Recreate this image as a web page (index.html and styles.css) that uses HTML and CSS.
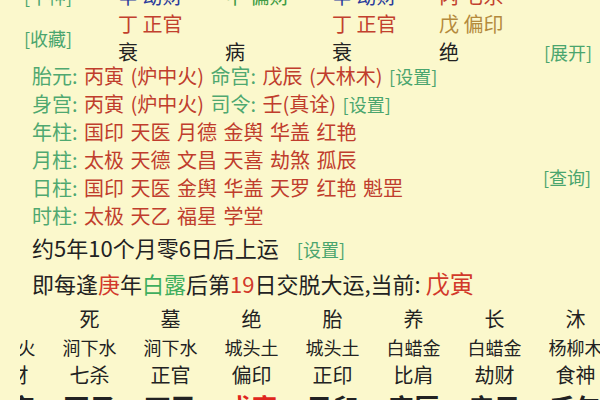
FILE: index.html
```html
<!DOCTYPE html>
<html lang="zh">
<head>
<meta charset="utf-8">
<title>八字排盘</title>
<link rel="stylesheet" href="styles.css">
</head>
<body>
<section class="pillars">
  <span class="link side">[十神]</span>
  <span class="blue">辛 劫财</span>
  <span class="green">甲 偏财</span>
  <span class="blue">辛 劫财</span>
  <span class="red">丙 七杀</span>
  <span></span>

  <span class="link side span2">[收藏]</span>
  <span class="red">丁 正官</span>
  <span></span>
  <span class="red">丁 正官</span>
  <span class="olive">戊 偏印</span>
  <span></span>

  <span class="stage">衰</span>
  <span class="stage">病</span>
  <span class="stage">衰</span>
  <span class="stage">绝</span>
  <span class="link">[展开]</span>
</section>

<section class="info">
  <p class="line"><span class="label">胎元:</span> <span class="val">丙寅 (炉中火)</span> <span class="label">命宫:</span> <span class="val">戊辰 (大林木)</span> <span class="link">[设置]</span></p>
  <p class="line"><span class="label">身宫:</span> <span class="val">丙寅 (炉中火)</span> <span class="label">司令:</span> <span class="val">壬(真诠)</span> <span class="link">[设置]</span></p>
  <p class="line"><span class="label">年柱:</span> <span class="val">国印 天医 月德 金舆 华盖 红艳</span></p>
  <p class="line"><span class="label">月柱:</span> <span class="val">太极 天德 文昌 天喜 劫煞 孤辰</span></p>
  <p class="line"><span class="label">日柱:</span> <span class="val">国印 天医 金舆 华盖 天罗 红艳 魁罡</span></p>
  <p class="line"><span class="label">时柱:</span> <span class="val">太极 天乙 福星 学堂</span></p>
  <span class="link query">[查询]</span>
</section>

<section class="luck">
  <p>约5年10个月零6日后上运<span class="link setting">[设置]</span></p>
  <p>即每逢<span class="hl-red">庚</span>年<span class="hl-green">白露</span>后第<span class="hl-red">19</span>日交脱大运,当前: <span class="current">戊寅</span></p>
</section>

<section class="table-view">
  <div class="table">
    <span class="stage"></span>
    <span class="stage">死</span>
    <span class="stage">墓</span>
    <span class="stage">绝</span>
    <span class="stage">胎</span>
    <span class="stage">养</span>
    <span class="stage">长</span>
    <span class="stage">沐</span>

    <span class="nayin">山头火</span>
    <span class="nayin">涧下水</span>
    <span class="nayin">涧下水</span>
    <span class="nayin">城头土</span>
    <span class="nayin">城头土</span>
    <span class="nayin">白蜡金</span>
    <span class="nayin">白蜡金</span>
    <span class="nayin">杨柳木</span>

    <span class="god">正财</span>
    <span class="god">七杀</span>
    <span class="god">正官</span>
    <span class="god">偏印</span>
    <span class="god">正印</span>
    <span class="god">比肩</span>
    <span class="god">劫财</span>
    <span class="god">食神</span>

    <span class="gz">乙亥</span>
    <span class="gz">丙子</span>
    <span class="gz">丁丑</span>
    <span class="gz now">戊寅</span>
    <span class="gz">己卯</span>
    <span class="gz">庚辰</span>
    <span class="gz">辛巳</span>
    <span class="gz">壬午</span>
  </div>
</section>
</body>
</html>
```

FILE: styles.css
```css
* {
  box-sizing: border-box;
  margin: 0;
  padding: 0;
}

html,
body {
  width: 600px;
  height: 400px;
  overflow: hidden;
}

body {
  background: #fbf8cc;
  font-family: "Noto Sans CJK SC", "Noto Sans", sans-serif;
  color: #222;
  white-space: nowrap;
}

.link {
  color: #4aa56e;
  font-size: 18px;
}

.blue { color: #2b3d9c; }
.green { color: #3f9c45; }
.red { color: #c2402e; }
.olive { color: #b48a3c; }

/* four pillars header */
.pillars {
  display: grid;
  grid-template-columns: 118px 107px 107px 107px 105px 1fr;
  grid-auto-rows: 28px;
  margin-top: -18px;
  font-size: 20px;
  line-height: 28px;
}

.pillars .side {
  padding-left: 24px;
}

.pillars .span2 {
  grid-row: span 2;
  align-self: center;
}

.pillars .stage {
  color: #222;
}

/* info lines */
.info {
  display: grid;
  grid-template-columns: 1fr 57px;
  grid-template-rows: repeat(6, 28px);
  margin-top: -4px;
  padding-left: 32px;
  font-size: 20px;
  line-height: 28px;
}

.info .line {
  grid-column: 1;
  word-spacing: 2px;
}

.info .label {
  color: #4fa870;
}

.info .val {
  color: #c03d2d;
}

.info .query {
  grid-column: 2;
  grid-row: 4 / 6;
  align-self: center;
  padding-top: 6px;
}

/* luck lines */
.luck {
  padding-left: 32px;
  font-size: 22px;
  line-height: 34px;
  color: #222;
}

.luck .setting {
  margin-left: 18px;
}

.hl-red { color: #d2392a; }
.hl-green { color: #3fae5e; }

.current {
  color: #d2392a;
  font-size: 24px;
}

/* da yun table (horizontally scrolled view) */
.table-view {
  margin-left: 20px;
  margin-top: 5px;
  overflow: hidden;
}

.table {
  display: grid;
  grid-template-columns: repeat(8, 81px);
  margin-left: -52px;
  text-align: center;
  color: #222;
}

.table .stage {
  font-size: 20px;
  line-height: 28px;
}

.table .nayin {
  font-size: 18px;
  line-height: 28px;
}

.table .god {
  font-size: 20px;
  line-height: 28px;
}

.table .gz {
  font-size: 26px;
  line-height: 36px;
  font-weight: bold;
}

.table .now {
  color: #e0261c;
}
```
